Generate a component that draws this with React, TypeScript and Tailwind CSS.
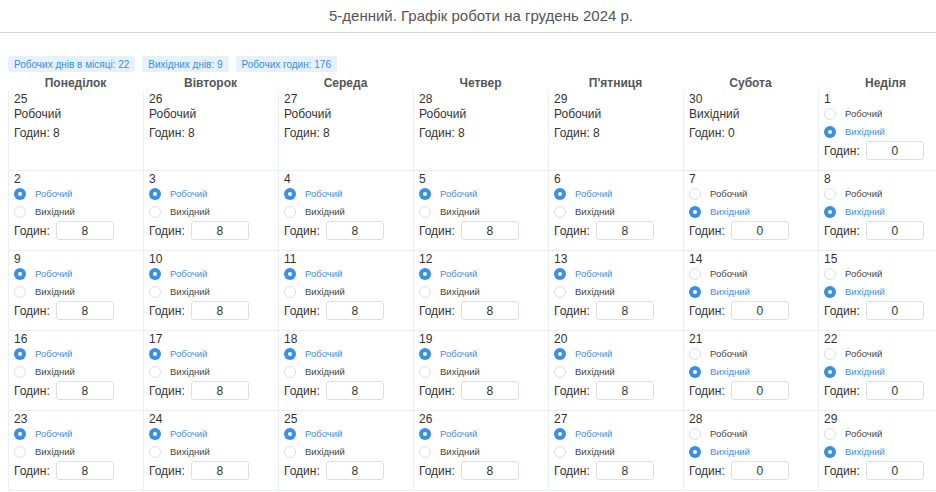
import { useState } from 'react';

type Cell = {
  day: number;
  editable: boolean;
  work: boolean;
};

const weekDays = ['Понеділок', 'Вівторок', 'Середа', 'Четвер', "П'ятниця", 'Субота', 'Неділя'];

function buildWeeks(): Cell[][] {
  const weeks: Cell[][] = [];
  // first row: tail of November + 1 Dec
  weeks.push([
    { day: 25, editable: false, work: true },
    { day: 26, editable: false, work: true },
    { day: 27, editable: false, work: true },
    { day: 28, editable: false, work: true },
    { day: 29, editable: false, work: true },
    { day: 30, editable: false, work: false },
    { day: 1, editable: true, work: false },
  ]);
  for (let start = 2; start <= 23; start += 7) {
    weeks.push(
      Array.from({ length: 7 }, (_, i) => ({ day: start + i, editable: true, work: i < 5 }))
    );
  }
  return weeks;
}

function Radio({ checked, label, onChange }: { checked: boolean; label: string; onChange: () => void }) {
  return (
    <label className="flex h-[18px] cursor-pointer items-center gap-[9px]" onClick={onChange}>
      {checked ? (
        <span className="flex h-[12px] w-[12px] items-center justify-center rounded-full bg-[#3a8ee6]">
          <span className="h-[4px] w-[4px] rounded-full bg-white" />
        </span>
      ) : (
        <span className="h-[12px] w-[12px] rounded-full border border-[#dcdfe6] bg-white" />
      )}
      <span className={checked ? 'text-[9.5px] text-[#3a8ee6]' : 'text-[9.5px] text-[#444]'}>{label}</span>
    </label>
  );
}

function DayCell({ cell }: { cell: Cell }) {
  const [work, setWork] = useState(cell.work);
  const hours = work ? 8 : 0;

  return (
    <div className="h-[80px] border-b border-l border-[#ebeef5] px-[5px] pt-[1px] text-[12px] text-[#333]">
      <div className="leading-[14px]">{cell.day}</div>
      {cell.editable ? (
        <>
          <div className="-mt-[1px]">
            <Radio checked={work} label="Робочий" onChange={() => setWork(true)} />
            <Radio checked={!work} label="Вихідний" onChange={() => setWork(false)} />
          </div>
          <div className="flex items-center gap-[6px]">
            <span>Годин:</span>
            <input
              readOnly
              value={hours}
              className="h-[19px] w-[58px] rounded-[3px] border border-[#dcdfe6] text-center text-[12px] text-[#333] outline-none"
            />
          </div>
        </>
      ) : (
        <>
          <div className="leading-[16px]">{work ? 'Робочий' : 'Вихідний'}</div>
          <div className="mt-[3px] leading-[16px]">Годин: {hours}</div>
        </>
      )}
    </div>
  );
}

export default function App() {
  const weeks = buildWeeks();

  return (
    <div className="min-h-screen w-[962px] bg-white font-['Liberation_Sans',Arial,sans-serif] text-[#333]">
      <div className="flex h-[33px] items-center justify-center border-b border-[#d0d0d0] text-[15px] text-[#555]">
        5-денний. Графік роботи на грудень 2024 р.
      </div>

      <div className="px-[8px] pt-[23px]">
        <div className="flex gap-[7px]">
          {['Робочих днів в місяці: 22', 'Вихідних днів: 9', 'Робочих годин: 176'].map((t) => (
            <span key={t} className="flex h-[16px] items-center rounded-[3px] bg-[#e6f1fc] px-[6px] text-[10px] text-[#3a8ee6]">
              {t}
            </span>
          ))}
        </div>

        <div className="mt-[3px] grid grid-cols-[repeat(7,135px)]">
          {weekDays.map((d) => (
            <div key={d} className="flex h-[16px] items-center justify-center text-[12px] font-bold text-[#555]">
              {d}
            </div>
          ))}
          {weeks.flat().map((c, i) => (
            <DayCell key={i} cell={c} />
          ))}
        </div>
      </div>
    </div>
  );
}
